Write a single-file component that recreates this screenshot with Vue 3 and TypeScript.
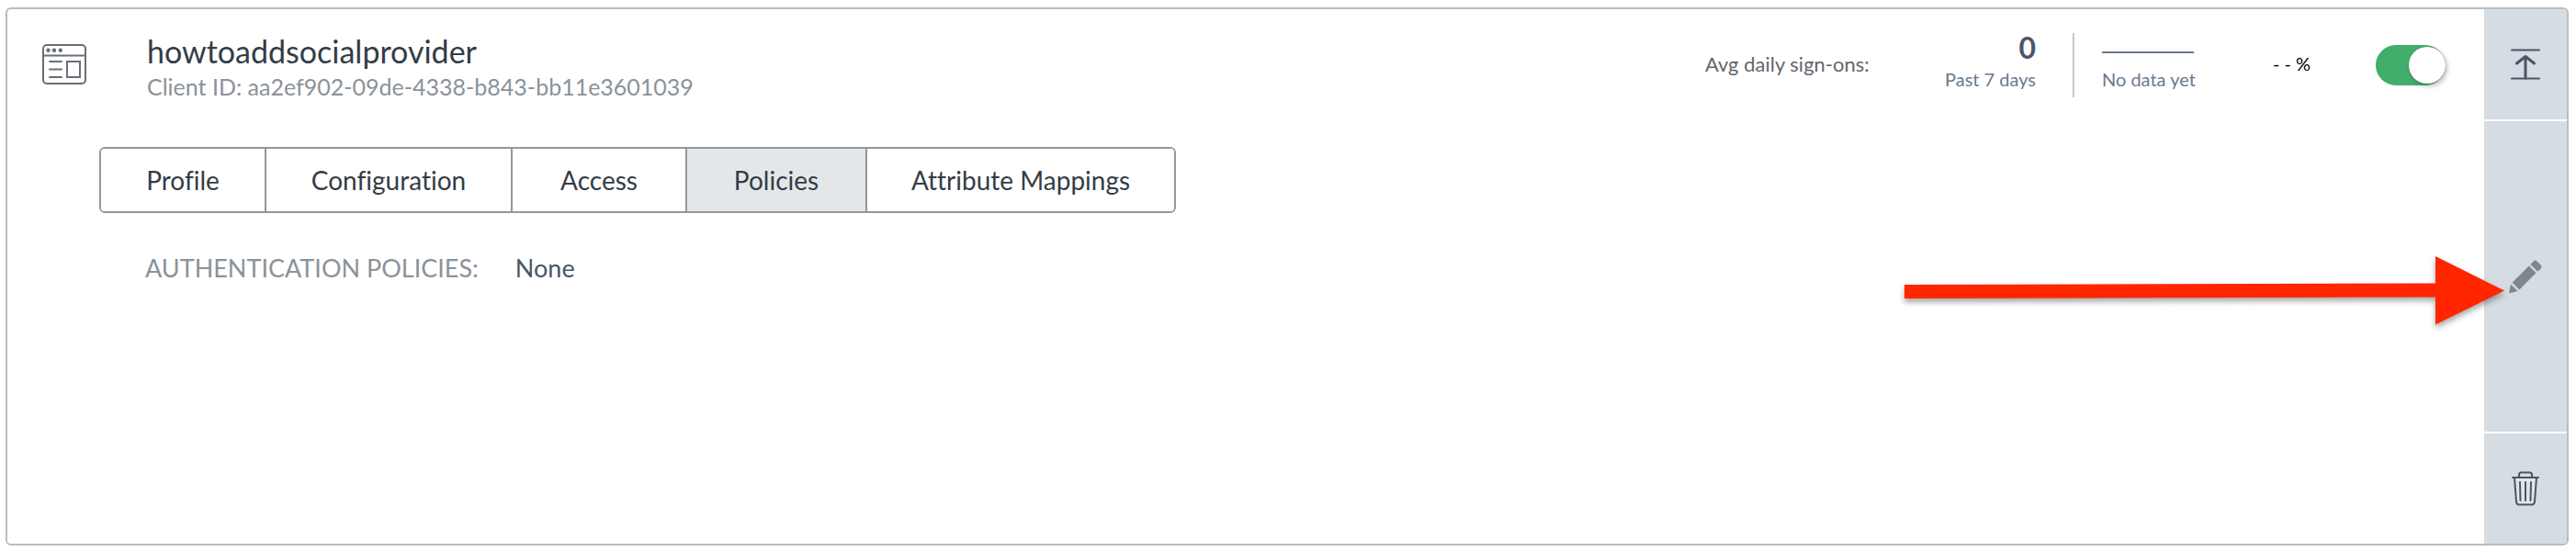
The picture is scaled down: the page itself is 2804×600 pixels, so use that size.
<script setup lang="ts">
import { ref } from 'vue'

interface Tab {
  id: string
  label: string
}

const tabs: Tab[] = [
  { id: 'profile', label: 'Profile' },
  { id: 'configuration', label: 'Configuration' },
  { id: 'access', label: 'Access' },
  { id: 'policies', label: 'Policies' },
  { id: 'mappings', label: 'Attribute Mappings' },
]

const activeTab = ref<string>('policies')
const enabled = ref<boolean>(true)
</script>

<template>
  <article class="card">
    <div class="main">
      <header class="header">
        <svg class="app-icon" viewBox="0 0 48 44" aria-hidden="true">
          <g fill="none" stroke="#686f77" stroke-width="2">
            <rect x="1" y="1" width="46" height="42" rx="4" />
            <path d="M1 12.500H47" />
            <path d="M8 19H21M8 27.500H21M8 36H21" stroke-linecap="round" />
            <rect x="27" y="19" width="14" height="17" />
          </g>
          <g fill="#686f77">
            <circle cx="6.500" cy="6.800" r="2.200" />
            <circle cx="13" cy="6.800" r="2.200" />
            <circle cx="19.800" cy="6.800" r="2.200" />
          </g>
        </svg>
        <div class="identity">
          <h1 class="name">howtoaddsocialprovider</h1>
          <p class="client">Client ID: aa2ef902-09de-4338-b843-bb11e3601039</p>
        </div>
        <div class="stats">
          <span class="stats-label">Avg daily sign-ons:</span>
          <div class="count">
            <strong class="count-value">0</strong>
            <span class="caption">Past 7 days</span>
          </div>
          <div class="trend">
            <span class="trend-line"></span>
            <span class="caption">No data yet</span>
          </div>
          <span class="percent">- - %</span>
          <input v-model="enabled" class="toggle" type="checkbox" role="switch" aria-label="Enable application" />
        </div>
      </header>

      <nav class="tabs" aria-label="Application sections">
        <button
          v-for="tab in tabs"
          :key="tab.id"
          type="button"
          class="tab"
          :class="{ active: tab.id === activeTab }"
          @click="activeTab = tab.id"
        >{{ tab.label }}</button>
      </nav>

      <dl class="policies">
        <dt>AUTHENTICATION POLICIES:</dt>
        <dd>None</dd>
      </dl>
    </div>

    <aside class="actions">
      <button type="button" class="action" aria-label="Collapse">
        <svg width="32" height="34" viewBox="0 0 32 34" fill="none" stroke="#4a5565" aria-hidden="true">
          <path d="M1 1.500H31M1 32.500H31" stroke-width="2" stroke-linecap="round" />
          <path d="M16 32V9M6.500 16L16 8.500L25.500 16" stroke-width="3" stroke-linecap="round" stroke-linejoin="round" />
        </svg>
      </button>
      <button type="button" class="action edit" aria-label="Edit">
        <svg width="38" height="38" viewBox="0 0 38 38" fill="#80868d" aria-hidden="true">
          <path d="M22.800 7.600L30.500 15.300L12.300 33.500L4.600 25.800Z" />
          <path d="M24.400 6L28 2.400Q29.800 .8 31.500 2.400L35.900 6.800Q37.500 8.600 35.900 10.300L32.200 13.800Z" />
          <path d="M3 27.500L10.600 35L1 37.500Z" />
        </svg>
      </button>
      <button type="button" class="action" aria-label="Delete">
        <svg width="30" height="38" viewBox="0 0 30 38" fill="none" stroke="#4a5565" stroke-width="2" stroke-linecap="round" stroke-linejoin="round" aria-hidden="true">
          <path d="M3 7L5 33Q5.200 36.500 8 36.500H22Q24.800 36.500 25 33L27 7" fill="#e0e6e9" />
          <path d="M1 7H29" />
          <path d="M8 6V4Q8 1.500 10.500 1.500H19.500Q22 1.500 22 4V6" />
          <path d="M9 12L9.500 32M15 12V32M21 12L20.500 32" />
        </svg>
      </button>
    </aside>

    <svg class="pointer" width="664" height="90" viewBox="0 0 664 90" aria-hidden="true">
      <path d="M5 36L583 34.500V5L658 42.500L583 79.500V49.500L5 51Z" fill="#ff2600" />
    </svg>
  </article>
</template>

<style>
body {
  margin: 0;
  background: #fff;
}
</style>

<style scoped>
.card {
  position: relative;
  box-sizing: border-box;
  display: flex;
  margin: 8px 8px 6px 6px;
  border: 2px solid #b7bec2;
  border-radius: 6px;
  overflow: hidden;
  background: #fff;
  color: #343c46;
  font-family: Lato, "Open Sans", sans-serif;
  font-variant-ligatures: none;
}

.main {
  flex: 1;
  min-width: 0;
}

.header {
  display: flex;
  align-items: flex-start;
  padding: 24px 42px 0 38px;
}

.app-icon {
  flex: none;
  width: 48px;
  height: 44px;
  margin-top: 14px;
}

.identity {
  margin-left: 66px;
}

.name {
  margin: 0;
  font-size: 34px;
  font-weight: 400;
  line-height: 44px;
}

.client {
  margin: 0;
  color: #8b9299;
  font-size: 25px;
  line-height: 32px;
}

.stats {
  display: flex;
  align-items: center;
  height: 70px;
  margin-top: 2px;
  margin-left: auto;
}

.stats-label {
  width: 182px;
  padding-bottom: 4px;
  color: #5f666e;
  font-size: 22px;
  white-space: nowrap;
}

.count {
  display: flex;
  flex-direction: column;
  align-items: flex-end;
  box-sizing: border-box;
  width: 220px;
  height: 70px;
  padding-right: 40px;
  border-right: 2px solid #c3c7cb;
}

.count-value {
  color: #4a5666;
  font-size: 32px;
  line-height: 32px;
}

.caption {
  color: #687a8e;
  font-size: 20px;
  line-height: 36px;
  white-space: nowrap;
}

.trend {
  display: flex;
  flex-direction: column;
  width: 186px;
  height: 70px;
  margin-left: 30px;
}

.trend-line {
  width: 100px;
  height: 2px;
  margin: 20px 0 10px;
  background: #687a8e;
}

.percent {
  width: 112px;
  padding-bottom: 4px;
  color: #000;
  font-size: 20px;
}

.toggle {
  appearance: none;
  flex: none;
  display: flex;
  justify-content: flex-end;
  box-sizing: border-box;
  width: 76px;
  height: 44px;
  margin: 0;
  padding: 2px 0;
  border-radius: 22px;
  background: #42ae6b;
  cursor: pointer;
}

.toggle::before {
  content: "";
  width: 40px;
  height: 40px;
  border-radius: 50%;
  background: #fff;
  box-shadow: 0 0 1px #777, 2px 3px 5px rgba(0, 0, 0, 0.25);
}

.toggle:not(:checked) {
  justify-content: flex-start;
  background: #b7bec2;
}

.tabs {
  display: grid;
  grid-template-columns: 180px 268px 190px 196px 334px;
  width: max-content;
  margin: 50px 0 0 100px;
  border: 2px solid #92989f;
  border-radius: 6px;
  overflow: hidden;
}

.tab {
  height: 68px;
  padding: 0;
  border: 0;
  border-right: 2px solid #92989f;
  background: #fff;
  color: #343c46;
  font-family: inherit;
  font-size: 28px;
  font-variant-ligatures: none;
  line-height: 36px;
  cursor: pointer;
}

.tab:last-child {
  border-right: 0;
}

.tab.active {
  background: #e3e7ea;
}

.policies {
  display: flex;
  gap: 40px;
  margin: 42px 0 0 150px;
  font-size: 27px;
  line-height: 36px;
}

.policies dt {
  color: #8b9299;
}

.policies dd {
  margin: 0;
  color: #4a5666;
}

.actions {
  flex: none;
  display: grid;
  grid-template-rows: 120px 338px 120px;
  gap: 2px;
  width: 90px;
}

.action {
  display: flex;
  align-items: center;
  justify-content: center;
  padding: 0;
  border: 0;
  background: #d5dde3;
  cursor: pointer;
}

.pointer {
  position: absolute;
  top: 264px;
  right: 62px;
  pointer-events: none;
  filter: drop-shadow(0 4px 3px rgba(0, 0, 0, 0.35));
}
</style>
